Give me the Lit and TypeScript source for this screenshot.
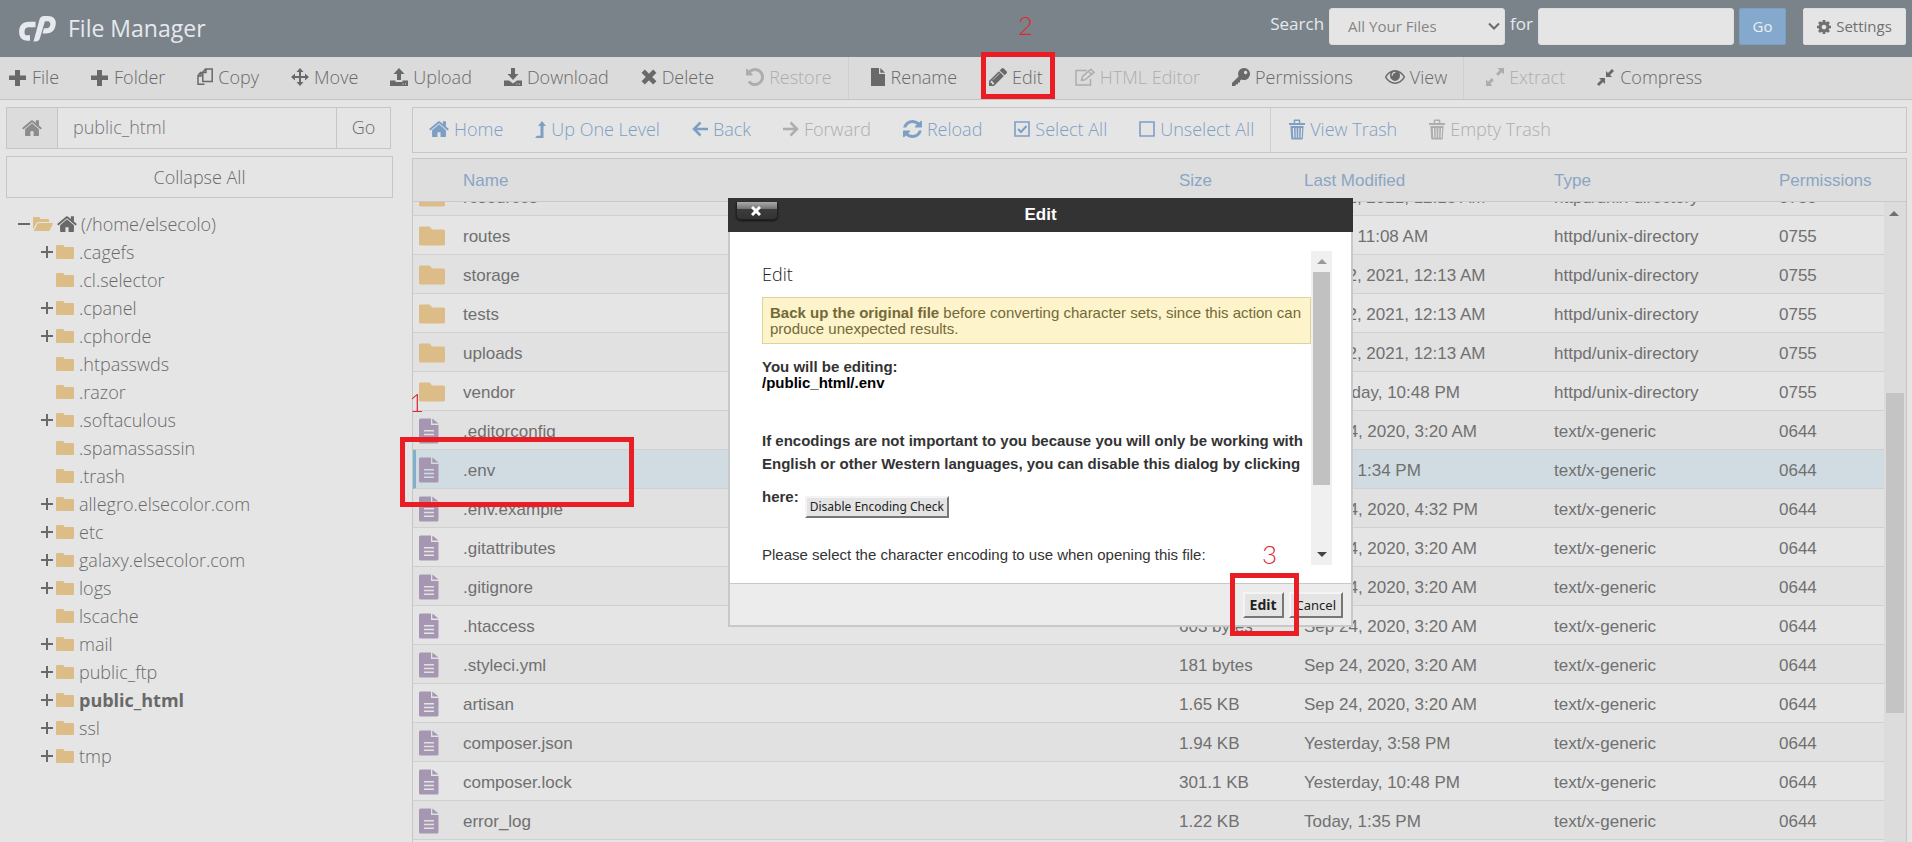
import { LitElement, html, svg, css } from "lit";
import { customElement, property, query } from "lit/decorators.js";
import { classMap } from "lit/directives/class-map.js";

type Glyph = { w: number; h: number; box: string; art: unknown };

const HOME = svg`<path d="M1472 992v480q0 26-19 45t-45 19h-384v-384h-256v384h-384q-26 0-45-19t-19-45v-480q0-1 .5-3t.5-3l575-474 575 474q1 2 1 6zm223-69l-62 74q-8 9-21 11h-3q-13 0-21-7l-692-577-692 577q-12 8-24 7-13-2-21-11l-62-74q-8-10-7-23.5t11-21.5l719-599q32-26 76-26t76 26l244 204v-195q0-14 9-23t23-9h192q14 0 23 9t9 23v408l219 182q10 8 11 21.5t-7 23.5z"/>`;
const TRASH = svg`<path d="M0 4h17v2H0zM5 4V1.6Q5 .5 6.1 .5h4.8Q12 .5 12 1.600V4h-1.500V2h-4v2z"/><path fill-rule="evenodd" d="M1.500 7h14l-.8 12.400q0 1.100-1.100 1.100H3.400q-1.100 0-1.100-1.100zM4 9l.5 9.700h1.200L5.300 9zm3 0 .2 9.700h1L8 9zm3 0-.2 9.700h1L11 9zm2.800 0-.5 9.700h1.200L14 9z"/>`;

const GLYPHS: Record<string, Glyph> = {
  plus: { w: 18, h: 17, box: "0 0 18 17", art: svg`<path d="M6 1h5v5.500h6v4.500h-6v6H6v-6H0V6.500h6z"/>` },
  copy: {
    w: 16, h: 18, box: "0 0 16 18",
    art: svg`<path fill="none" stroke="currentColor" stroke-width="1.500" d="M6 4.500H3.500L1 7.500V16.300h6.500M4 5v3H1M5.800 4.200 8.500 1H15.200V13.500H5.800zM9 1v3.500H6"/>`,
  },
  move: {
    w: 18, h: 18, box: "0 0 18 18",
    art: svg`<path d="M9 0l3.500 4H10v4h4V5.500L18 9l-4 3.500V10h-4v4h2.500L9 18l-3.500-4H8v-4H4v2.500L0 9l4-3.500V8h4V4H5.500z"/>`,
  },
  upload: {
    w: 18, h: 18, box: "0 0 18 18",
    art: svg`<path d="M9 0l5.500 6H11v6H7V6H3.500zM0 12.500h5.500v1.500h7v-1.500H18V18H0zm12.500 3v1h1v-1zm2.500 0v1h1v-1z" fill-rule="evenodd"/>`,
  },
  download: {
    w: 18, h: 18, box: "0 0 18 18",
    art: svg`<path d="M7 0h4v6h3.500L9 12 3.500 6H7zM0 12.500h5L9 15.500l4-3h5V18H0zm12.500 3v1h1v-1zm2.500 0v1h1v-1z" fill-rule="evenodd"/>`,
  },
  times: { w: 16, h: 16, box: "0 0 16 16", art: svg`<path fill="none" stroke="currentColor" stroke-width="4.600" d="M2.200 2.200 13.800 13.800M13.800 2.200 2.200 13.800"/>` },
  undo: {
    w: 18, h: 18, box: "128 128 1536 1536",
    art: svg`<path d="M1664 896q0 156-61 298t-164 245-245 164-298 61q-172 0-327-72.500t-264-204.500q-7-10-6.500-22.500t8.500-20.500l137-138q10-9 25-9 16 2 23 12 73 95 179 147t225 52q104 0 198.500-40.500t163.500-109.500 109.500-163.500 40.500-198.500-40.500-198.500-109.500-163.500-163.500-109.500-198.500-40.500q-98 0-188 35.500t-160 101.500l137 138q31 30 14 69-17 40-59 40h-448q-26 0-45-19t-19-45v-448q0-42 40-59 39-17 69 14l130 129q107-101 244.500-156.500t284.500-55.500q156 0 298 61t245 164 164 245 61 298z"/>`,
  },
  file: { w: 15, h: 18, box: "0 0 15 18", art: svg`<path d="M0 0h8v6h6v12H0zM9.300 0 14 4.800H9.300z"/>` },
  pencil: {
    w: 18, h: 18, box: "128 149 1515 1515",
    art: svg`<path d="M491 1536l91-91-235-235-91 91v107h128v128h107zm523-928q0-22-22-22-10 0-17 7l-542 542q-7 7-7 17 0 22 22 22 10 0 17-7l542-542q7-7 7-17zm-54-192l416 416-832 832h-416v-416zm683 96q0 53-37 90l-166 166-416-416 166-165q36-38 90-38 53 0 91 38l235 234q37 39 37 91z"/>`,
  },
  compose: {
    w: 20, h: 18, box: "0 0 20 18",
    art: svg`<path fill="none" stroke="currentColor" stroke-width="1.500" d="M12 2.500H1V17H15.500V11"/><path fill="none" stroke="currentColor" stroke-width="1.500" d="M6.500 12.300 7.500 8.500 15.800 1.200 19 4.300 10 11.800zM13.500 3.200l3.200 3"/>`,
  },
  key: {
    w: 18, h: 18, box: "0 0 18 18",
    art: svg`<path fill-rule="evenodd" d="M12 0a6 6 0 1 1-2.600 11.400L8 12.800v1.700H6v1.800H4.200L3 18H0v-3l6.600-6.600A6 6 0 0 1 12 0zm1.600 2.800a1.700 1.700 0 1 0 0 3.400 1.700 1.700 0 0 0 0-3.400z"/>`,
  },
  eye: {
    w: 20, h: 14, box: "0 384 1792 1152",
    art: svg`<path d="M1664 960q-152-236-381-353 61 104 61 225 0 185-131.500 316.500t-316.500 131.500-316.500-131.500-131.500-316.500q0-121 61-225-229 117-381 353 133 205 333.500 326.500t434.500 121.500 434.500-121.500 333.500-326.500zm-720-384q0-20-14-34t-34-14q-125 0-214.500 89.500t-89.500 214.500q0 20 14 34t34 14 34-14 14-34q0-86 61-147t147-61q20 0 34-14t14-34zm848 384q0 34-20 69-140 230-376.500 368.500t-499.500 138.500-499.500-139-376.500-368q-20-35-20-69t20-69q140-229 376.500-368t499.500-139 499.500 139 376.500 368q20 35 20 69z"/>`,
  },
  expand: {
    w: 18, h: 18, box: "0 0 18 18",
    art: svg`<path d="M18 0v6.500l-2.200-2.200-3.600 3.600-2.100-2.100 3.600-3.600L11.500 0zM0 18v-6.500l2.200 2.200 3.600-3.600 2.100 2.100-3.600 3.600L6.500 18z"/>`,
  },
  compress: {
    w: 18, h: 17, box: "0 0 18 17",
    art: svg`<path d="M9 8V2l2 2L15 0l2 2-4 4 2 2zM8 9v6l-2-2-4 4-2-2 4-4-2-2z"/>`,
  },
  home: { w: 20, h: 16, box: "64 240 1664 1300", art: HOME },
  levelup: { w: 11, h: 17, box: "0 0 11 17", art: svg`<path d="M7 0l4 5H8.500v12H0l2-2.300h3.500V5H3z"/>` },
  left: { w: 16, h: 16, box: "0 0 16 16", art: svg`<path fill="none" stroke="currentColor" stroke-width="2.500" d="M8.500 1.500 2 8l6.500 6.500M2 8h14"/>` },
  right: { w: 16, h: 16, box: "0 0 16 16", art: svg`<path fill="none" stroke="currentColor" stroke-width="2.500" d="M7.500 1.500 14 8l-6.500 6.500M14 8H0"/>` },
  refresh: {
    w: 19, h: 18, box: "128 128 1536 1536",
    art: svg`<path d="M1639 1056q0 5-1 7-64 268-268 434.500t-478 166.500q-146 0-282.500-55t-243.500-157l-129 129q-19 19-45 19t-45-19-19-45v-448q0-26 19-45t45-19h448q26 0 45 19t19 45-19 45l-137 137q71 66 161 102t187 36q134 0 250-65t186-179q11-17 53-117 8-23 30-23h192q13 0 22.500 9.500t9.500 22.500zm25-800v448q0 26-19 45t-45 19h-448q-26 0-45-19t-19-45 19-45l138-138q-148-137-349-137-134 0-250 65t-186 179q-11 17-53 117-8 23-30 23h-199q-13 0-22.500-9.500t-9.500-22.500v-7q65-268 270-434.500t480-166.500q146 0 284 55.500t245 156.500l130-129q19-19 45-19t45 19 19 45z"/>`,
  },
  check: { w: 16, h: 16, box: "0 0 16 16", art: svg`<path fill="none" stroke="currentColor" stroke-width="1.600" d="M1 1h14v14H1z"/><path fill="none" stroke="currentColor" stroke-width="2" d="M4 8l3 3 5.500-6"/>` },
  uncheck: { w: 16, h: 16, box: "0 0 16 16", art: svg`<path fill="none" stroke="currentColor" stroke-width="1.600" d="M1 1h14v14H1z"/>` },
  trash: { w: 16, h: 21, box: "0 0 17 21", art: TRASH },
  gear: {
    w: 14, h: 14, box: "128 128 1536 1536",
    art: svg`<path d="M1152 896q0-106-75-181t-181-75-181 75-75 181 75 181 181 75 181-75 75-181zm512-109v222q0 12-8 23t-20 13l-185 28q-19 54-39 91 35 50 107 138 10 12 10 25t-9 23q-27 37-99 108t-94 71q-12 0-26-9l-138-108q-44 23-91 38-16 136-29 186-7 28-36 28h-222q-14 0-24.500-8.500t-11.500-21.500l-28-184q-49-16-90-37l-141 107q-10 9-25 9-14 0-25-11-126-114-165-168-7-10-7-23 0-12 8-23 15-21 51-66.500t54-70.500q-27-50-41-99l-183-27q-13-2-21-12.500t-8-23.500v-222q0-12 8-23t19-13l186-28q14-46 39-92-40-57-107-138-10-12-10-24 0-10 9-23 26-36 98.500-107.500t94.500-71.500q13 0 26 10l138 107q44-23 91-38 16-136 29-186 7-28 36-28h222q14 0 24.500 8.500t11.500 21.500l28 184q49 16 90 37l142-107q9-9 24-9 13 0 25 10 129 119 165 170 7 8 7 22 0 12-8 23-15 21-51 66.500t-54 70.500q26 50 41 98l183 28q13 2 21 12.500t8 23.500z"/>`,
  },
  folder: { w: 18, h: 14, box: "0 0 18 14", art: svg`<path d="M0 1Q0 0 1 0h6q1 0 1 1.200Q8 2 9 2h8q1 0 1 1v10q0 1-1 1H1q-1 0-1-1z"/>` },
  folderOpen: { w: 20, h: 14, box: "0 0 20 14", art: svg`<path d="M0 12.500V1Q0 0 1 0h5q1 0 1 1v1h8q1 0 1 1v2H5.500Q4.200 5 3.500 6zM.8 14 4.300 7Q4.700 6 5.800 6H19q1.300 0 .8 1L17 13q-.5 1-1.500 1z"/>` },
  bigFolder: { w: 26, h: 20, box: "0 0 26 20", art: svg`<path d="M0 1.500Q0 .5 1.500 .5H10q1 0 1.500 1L13 3.500h11.500q1.500 0 1.500 1.500v13q0 1.500-1.500 1.500h-23Q0 19.500 0 18z"/>` },
  document: {
    w: 20, h: 26, box: "0 0 20 26",
    art: svg`<path fill-rule="evenodd" d="M1.500 .5H12V7h7.500v17q0 1.500-1.500 1.500H1.500Q0 25.500 0 24V2Q0 .5 1.500 .5zM5 12v1.500h10V12zm0 3.700v1.500h10v-1.500zm0 3.700v1.500h10v-1.500zM13.300 .5l6.200 5h-6.200z"/>`,
  },
  expandNode: { w: 12, h: 12, box: "0 0 12 12", art: svg`<path d="M5 0h2v5h5v2H7v5H5V7H0V5h5z"/>` },
  collapseNode: { w: 12, h: 12, box: "0 0 12 12", art: svg`<path d="M0 5h12v2H0z"/>` },
};

@customElement("fm-icon")
class FmIcon extends LitElement {
  @property() name = "plus";
  static styles = css`
    :host { display: inline-flex; flex: none; }
    svg { display: block; fill: currentColor; }
  `;
  render() {
    const g = GLYPHS[this.name];
    return html`<svg width=${g.w} height=${g.h} viewBox=${g.box} preserveAspectRatio="none" aria-hidden="true">${g.art}</svg>`;
  }
}

type Action = { icon: string; label: string; off?: boolean; divider?: boolean };

const TOOLS: Action[] = [
  { icon: "plus", label: "File" },
  { icon: "plus", label: "Folder" },
  { icon: "copy", label: "Copy" },
  { icon: "move", label: "Move" },
  { icon: "upload", label: "Upload" },
  { icon: "download", label: "Download" },
  { icon: "times", label: "Delete" },
  { icon: "undo", label: "Restore", off: true },
  { icon: "file", label: "Rename", divider: true },
  { icon: "pencil", label: "Edit" },
  { icon: "compose", label: "HTML Editor", off: true },
  { icon: "key", label: "Permissions" },
  { icon: "eye", label: "View" },
  { icon: "expand", label: "Extract", off: true, divider: true },
  { icon: "compress", label: "Compress" },
];

const NAV: Action[] = [
  { icon: "home", label: "Home" },
  { icon: "levelup", label: "Up One Level" },
  { icon: "left", label: "Back" },
  { icon: "right", label: "Forward", off: true },
  { icon: "refresh", label: "Reload" },
  { icon: "check", label: "Select All" },
  { icon: "uncheck", label: "Unselect All" },
  { icon: "trash", label: "View Trash", divider: true },
  { icon: "trash", label: "Empty Trash", off: true },
];

const TREE: [name: string, children: boolean][] = [
  [".cagefs", true], [".cl.selector", false], [".cpanel", true], [".cphorde", true],
  [".htpasswds", false], [".razor", false], [".softaculous", true], [".spamassassin", false],
  [".trash", false], ["allegro.elsecolor.com", true], ["etc", true], ["galaxy.elsecolor.com", true],
  ["logs", true], ["lscache", false], ["mail", true], ["public_ftp", true],
  ["public_html", true], ["ssl", true], ["tmp", true],
];

const DIR = "httpd/unix-directory";
const TXT = "text/x-generic";
const FILES: [name: string, size: string, modified: string, type: string, mode: string][] = [
  ["resources", "4 KB", "Feb 12, 2021, 12:13 AM", DIR, "0755"],
  ["routes", "4 KB", "Today, 11:08 AM", DIR, "0755"],
  ["storage", "4 KB", "Feb 12, 2021, 12:13 AM", DIR, "0755"],
  ["tests", "4 KB", "Feb 12, 2021, 12:13 AM", DIR, "0755"],
  ["uploads", "4 KB", "Feb 12, 2021, 12:13 AM", DIR, "0755"],
  ["vendor", "4 KB", "Yesterday, 10:48 PM", DIR, "0755"],
  [".editorconfig", "220 bytes", "Sep 24, 2020, 3:20 AM", TXT, "0644"],
  [".env", "1.1 KB", "Today, 1:34 PM", TXT, "0644"],
  [".env.example", "1 KB", "Sep 24, 2020, 4:32 PM", TXT, "0644"],
  [".gitattributes", "111 bytes", "Sep 24, 2020, 3:20 AM", TXT, "0644"],
  [".gitignore", "191 bytes", "Sep 24, 2020, 3:20 AM", TXT, "0644"],
  [".htaccess", "603 bytes", "Sep 24, 2020, 3:20 AM", TXT, "0644"],
  [".styleci.yml", "181 bytes", "Sep 24, 2020, 3:20 AM", TXT, "0644"],
  ["artisan", "1.65 KB", "Sep 24, 2020, 3:20 AM", TXT, "0644"],
  ["composer.json", "1.94 KB", "Yesterday, 3:58 PM", TXT, "0644"],
  ["composer.lock", "301.1 KB", "Yesterday, 10:48 PM", TXT, "0644"],
  ["error_log", "1.22 KB", "Today, 1:35 PM", TXT, "0644"],
];

const resets = css`
  *, *::before, *::after { box-sizing: border-box; }
  button, input, select { font: inherit; color: inherit; margin: 0; }
  a { color: inherit; text-decoration: none; }
  ul { list-style: none; margin: 0; padding: 0; }
`;

@customElement("fm-actions")
class FmActions extends LitElement {
  @property({ attribute: false }) items: Action[] = [];
  static styles = [
    resets,
    css`
      :host { display: flex; align-items: stretch; overflow: hidden; white-space: nowrap; }
      .action {
        display: flex; align-items: center; gap: 5px; flex: none;
        padding: 0 16px 2px; border: 0; background: none; cursor: pointer;
      }
      .divided { border-left: 1px solid #cfcfcf; padding-left: var(--divider-gap, 18px); }
      .action:disabled { color: #adadad; cursor: default; }
    `,
  ];
  render() {
    return this.items.map(
      (a) => html`<button type="button" class=${classMap({ action: true, divided: !!a.divider })} ?disabled=${a.off}>
        <fm-icon name=${a.icon}></fm-icon>${a.label}
      </button>`,
    );
  }
}

@customElement("fm-tree")
class FmTree extends LitElement {
  @property() current = "";
  static styles = [
    resets,
    css`
      :host { display: block; }
      .row { display: flex; align-items: center; height: 28px; gap: 3px; white-space: nowrap; }
      .root { padding-left: 12px; }
      .child { padding-left: 35px; }
      .toggle { display: flex; width: 12px; padding: 0; border: 0; background: none; }
      .name { display: flex; align-items: center; gap: 5px; }
      .root .name { gap: 4px; }
      .tint { color: #dcbd88; }
      .current { font-weight: 700; }
    `,
  ];
  render() {
    return html`<ul>
      <li>
        <div class="row root">
          <button type="button" class="toggle" aria-label="Collapse home"><fm-icon name="collapseNode"></fm-icon></button>
          <a class="name" href="#home"><fm-icon class="tint" name="folderOpen"></fm-icon><fm-icon name="home"></fm-icon>(/home/elsecolo)</a>
        </div>
        <ul>
          ${TREE.map(
            ([name, children]) => html`<li class="row child">
              ${children
                ? html`<button type="button" class="toggle" aria-label="Expand ${name}"><fm-icon name="expandNode"></fm-icon></button>`
                : html`<span class="toggle"></span>`}
              <a class=${classMap({ name: true, current: name === this.current })} href="#${name}">
                <fm-icon class="tint" name="folder"></fm-icon>${name}
              </a>
            </li>`,
          )}
        </ul>
      </li>
    </ul>`;
  }
}

@customElement("fm-files")
class FmFiles extends LitElement {
  @property() selected = "";
  @query(".scroller") scroller!: HTMLElement;
  static styles = [
    resets,
    css`
      :host {
        display: block; position: relative; isolation: isolate; min-height: 0;
        border: 1px solid #c6c6c6; border-bottom: 0; color: #707070;
        font-family: "Liberation Sans", Arial, sans-serif; font-size: 17px; font-weight: 400;
      }
      .scroller { height: 100%; overflow: hidden; padding-bottom: 2px; }
      .files { width: 100%; border-collapse: separate; border-spacing: 0; table-layout: fixed; }
      .c-icon { width: 41px; }
      .c-size { width: 125px; }
      .c-modified { width: 250px; }
      .c-type { width: 225px; }
      .c-mode { width: 136px; }
      th {
        position: sticky; top: 0; z-index: 1; height: 43px; padding: 0 9px; text-align: left;
        font-weight: 400; color: #8ba5c4; background: #dedede; border-bottom: 1px solid #cacaca;
      }
      td { height: 39px; padding: 2px 9px 0; border-bottom: 1px solid #d0d0d0; white-space: nowrap; }
      .icon { padding: 1px 0 0 6px; }
      .icon fm-icon { display: flex; color: #a597b1; }
      .icon .dir { color: #dcbd88; }
      tbody tr:nth-child(odd) { background: #e1e1e1; }
      tbody .selected { background: #d0dce2; }
      .selected .icon { padding-left: 3px; border-left: 3px solid #7fb0cd; }
      .bar {
        position: absolute; z-index: 2; top: 43px; right: 0; bottom: 0; width: 22px;
        display: grid; grid-template-rows: 191px 320px 1fr; background: #dcdcdc; padding-right: 2px;
      }
      .up { justify-self: center; align-self: start; margin-top: 9px; border: 5px solid transparent; border-top: 0; border-bottom-color: #707070; }
      .thumb { background: #c4c4c4; margin-left: 2px; }
    `,
  ];
  firstUpdated() {
    this.scroller.scrollTop = 25;
  }
  render() {
    return html`
      <div class="scroller">
        <table class="files">
          <colgroup>
            <col class="c-icon" /><col /><col class="c-size" /><col class="c-modified" /><col class="c-type" /><col class="c-mode" />
          </colgroup>
          <thead>
            <tr><th></th><th>Name</th><th>Size</th><th>Last Modified</th><th>Type</th><th>Permissions</th></tr>
          </thead>
          <tbody>
            ${FILES.map(([name, size, modified, type, mode]) => {
              const dir = type === DIR;
              return html`<tr class=${name === this.selected ? "selected" : ""}>
                <td class="icon"><fm-icon class=${dir ? "dir" : ""} name=${dir ? "bigFolder" : "document"}></fm-icon></td>
                <td>${name}</td><td>${size}</td><td>${modified}</td><td>${type}</td><td>${mode}</td>
              </tr>`;
            })}
          </tbody>
        </table>
      </div>
      <div class="bar"><span class="up"></span><span class="thumb"></span></div>
    `;
  }
}

@customElement("fm-dialog")
class FmDialog extends LitElement {
  @property() path = "";
  static styles = [
    resets,
    css`
      :host {
        display: block; font-family: "Liberation Sans", Arial, sans-serif; font-size: 15px;
        font-weight: 400; line-height: 16px; color: #333; background: #fff;
      }
      .title {
        position: relative; display: flex; align-items: center; justify-content: center; height: 34px;
        margin: 0; background: #333; color: #fff; font-size: 17px; font-weight: 700;
      }
      .close {
        position: absolute; left: 8px; top: 4px; width: 42px; height: 18px; padding: 0 3px 0 0;
        display: flex; align-items: center; justify-content: center; color: #fff;
        border: 1px solid #222; border-top: 0; border-radius: 0 0 5px 5px;
        background: linear-gradient(#aaa 0, #777 38%, #3c3c3c 42%, #333 100%);
        box-shadow: 0 1px 2px #111;
      }
      .body {
        display: grid; grid-template-columns: 1fr 21px; height: 351px; padding: 19px 19px 18px 32px;
        border: 2px solid #c8c8c8; border-width: 0 2px;
      }
      .heading { margin: 15px 0 14px; font: 300 18px/17px "Open Sans", sans-serif; color: #222; }
      .warning { margin: 0 0 15px; padding: 7px 2px 6px 7px; border: 1px solid #ddd39b; background: #fdf4cb; color: #746937; }
      .target { margin: 0 0 38px; font-weight: 700; }
      .path { display: block; color: #000; }
      .hint { margin: 0 0 29px; font-weight: 700; line-height: 23px; }
      .check { display: flex; align-items: flex-start; gap: 6px; margin-top: 10px; }
      .prompt { margin: 0; white-space: nowrap; }
      .scrollbar { display: grid; grid-template-rows: 21px 213px 1fr; background: #f0f0f0; justify-items: center; }
      .arrow { border: 5px solid transparent; align-self: center; }
      .up { border-top: 0; border-bottom-color: #999; }
      .thumb { width: 17px; background: #c1c1c1; }
      .down { border-bottom: 0; border-top-color: #444; align-self: end; margin-bottom: 8px; }
      .key {
        font: 400 13px/14px "Noto Sans", sans-serif; color: #222; background: #e4e4e4; white-space: nowrap;
        border: 2px solid #777; border-top-color: #f4f4f4; border-left-color: #f4f4f4;
      }
      .small { height: 22px; margin-top: 11px; padding: 0 3px; font-size: 12px; }
      .footer {
        display: flex; align-items: center; justify-content: flex-end; gap: 5px; height: 44px;
        padding: 0 8px; background: #ececec; border: 2px solid #c8c8c8; border-top-width: 1px;
      }
      .act { height: 26px; padding: 0 5px; }
      .primary { font-weight: 700; font-size: 14px; }
    `,
  ];
  render() {
    return html`
      <h1 class="title">
        <button type="button" class="close" aria-label="Close">
          <svg width="10" height="10" viewBox="0 0 10 10" aria-hidden="true"><path d="M1 1l8 8M9 1L1 9" stroke="#fff" stroke-width="3" /></svg>
        </button>
        Edit
      </h1>
      <div class="body">
        <div>
          <h2 class="heading">Edit</h2>
          <p class="warning"><strong>Back up the original file</strong> before converting character sets, since this action can produce unexpected results.</p>
          <p class="target">You will be editing:<span class="path">${this.path}</span></p>
          <div class="hint">
            If encodings are not important to you because you will only be working with
            English or other Western languages, you can disable this dialog by clicking
            <div class="check">here: <button type="button" class="key small">Disable Encoding Check</button></div>
          </div>
          <p class="prompt">Please select the character encoding to use when opening this file:</p>
        </div>
        <div class="scrollbar"><span class="arrow up"></span><span class="thumb"></span><span class="arrow down"></span></div>
      </div>
      <div class="footer">
        <button type="button" class="key act primary">Edit</button>
        <button type="button" class="key act">Cancel</button>
      </div>
    `;
  }
}

@customElement("app-root")
class AppRoot extends LitElement {
  static styles = [
    resets,
    css`
      :host {
        display: flex; flex-direction: column; position: relative; height: 100vh; overflow: hidden;
        background: #e5e5e5; color: #696969; font: 300 18px/23px "Open Sans", sans-serif;
      }
      .banner {
        display: flex; align-items: center; height: 57px; flex: none; padding: 0 6px 0 18px;
        background: #7b838a; color: #e6e9ee;
      }
      .brand { display: flex; align-items: center; gap: 11px; margin: 0; font-size: 23px; font-weight: 400; }
      .search { display: flex; align-items: center; gap: 5px; margin-left: auto; height: 37px; margin-bottom: 4px; font-size: 17px; font-weight: 400; }
      .label { margin-bottom: 6px; }
      .picker { position: relative; display: flex; height: 37px; }
      .select {
        appearance: none; width: 176px; padding: 0 36px 0 18px; border: 1px solid #dedede; border-radius: 3px;
        background: #e5e5e5; color: #858585; font-size: 15px;
      }
      .caret { position: absolute; right: 5px; top: 14px; pointer-events: none; }
      .term { width: 196px; height: 37px; padding: 0 12px; border: 1px solid #dedede; border-radius: 3px; background: #e5e5e5; color: #666; }
      .go { width: 47px; height: 37px; padding: 0; border: 1px solid #7ba1c7; border-radius: 2px; background: #85a9cc; color: #e9eef4; font-size: 15px; }
      .settings {
        display: flex; align-items: center; justify-content: center; gap: 5px; width: 103px; height: 37px; margin-left: 12px; padding: 0;
        border: 1px solid #dedede; border-radius: 2px; background: #e5e5e5; color: #707070; font-size: 15px;
      }
      .toolbar { flex: none; background: #dcdbdb; border-bottom: 1px solid #c4c4c4; }
      .tools { --divider-gap: 22px; height: 42px; margin-left: -7px; }
      .main { flex: 1; min-height: 0; display: grid; grid-template-columns: 387px minmax(0, 1fr); gap: 19px; padding: 7px 5px 0 6px; }
      .side { min-width: 0; }
      .path { display: grid; grid-template-columns: 51px 1fr 54px; height: 42px; margin-right: 2px; border: 1px solid #c6c6c6; }
      .home { display: flex; align-items: center; justify-content: center; border: 0; border-right: 1px solid #c6c6c6; background: #dcdcdc; color: #8c8c8c; }
      .where { min-width: 0; padding: 0 15px 2px; border: 0; background: none; color: #757575; }
      .jump { border: 0; border-left: 1px solid #c6c6c6; background: none; padding: 0 0 2px; }
      .collapse { display: block; width: 100%; height: 42px; margin: 7px 0 12px; padding: 0; border: 1px solid #c6c6c6; background: none; }
      .content { display: flex; flex-direction: column; min-width: 0; min-height: 0; }
      .nav { height: 46px; flex: none; margin-bottom: 5px; border: 1px solid #c6c6c6; color: #7d9fc4; }
      .files { flex: 1; }
      .dialog { position: absolute; left: 728px; top: 198px; width: 625px; }
      .mark { position: absolute; border: 5px solid #ea1c24; pointer-events: none; }
      .step { position: absolute; color: #de2a33; font: 300 26px/26px Lato, sans-serif; pointer-events: none; }
      .mark-row { left: 400px; top: 437px; width: 234px; height: 70px; }
      .mark-tool { left: 981px; top: 52px; width: 74px; height: 47px; }
      .mark-confirm { left: 1230px; top: 573px; width: 69px; height: 63px; }
      .step-1 { left: 409px; top: 389px; }
      .step-2 { left: 1018px; top: 12px; }
      .step-3 { left: 1262px; top: 541px; }
    `,
  ];
  render() {
    return html`
      <header class="banner">
        <h1 class="brand">
          <svg width="39" height="26" viewBox="0 0 39 26" aria-label="cPanel" role="img">
            <path fill="none" stroke="#e6e9ee" stroke-width="5.500" d="M17.500 8.500H10.500Q5.300 8.500 4 13.500L3.800 15.500Q3.500 22 9 22H12" />
            <path fill="#e6e9ee" d="M15.500 25.500 21.500 3.500Q22.300 0 26 0H30Q38 0 37.800 8 37 17 28.500 17.500H24.500L26 12.300H28.500Q32 12 32.300 8.500 32.300 5.500 30 5.300H27.800Q26.800 5.300 26.500 6.500L22 22Q21 25.500 17.500 25.500z" />
          </svg>
          File Manager
        </h1>
        <form class="search">
          <label class="label" for="scope">Search</label>
          <span class="picker">
            <select class="select" id="scope"><option>All Your Files</option></select>
            <svg class="caret" width="12" height="10" viewBox="0 0 12 10" aria-hidden="true"><path d="M1 1.500l5 5 5-5" fill="none" stroke="#6a6a6a" stroke-width="2" /></svg>
          </span>
          <label class="label" for="term">for</label>
          <input class="term" id="term" type="text" />
          <button type="button" class="go">Go</button>
          <button type="button" class="settings"><fm-icon name="gear"></fm-icon>Settings</button>
        </form>
      </header>
      <div class="toolbar"><fm-actions class="tools" .items=${TOOLS}></fm-actions></div>
      <main class="main">
        <aside class="side">
          <form class="path">
            <button type="button" class="home" aria-label="Home"><fm-icon name="home"></fm-icon></button>
            <input class="where" type="text" aria-label="Path" value="public_html" />
            <button type="button" class="jump">Go</button>
          </form>
          <button type="button" class="collapse">Collapse All</button>
          <fm-tree current="public_html"></fm-tree>
        </aside>
        <section class="content">
          <fm-actions class="nav" .items=${NAV}></fm-actions>
          <fm-files class="files" selected=".env"></fm-files>
        </section>
      </main>
      <fm-dialog class="dialog" role="dialog" path="/public_html/.env"></fm-dialog>
      <span class="mark mark-row"></span>
      <span class="mark mark-tool"></span>
      <span class="mark mark-confirm"></span>
      <span class="step step-1">1</span>
      <span class="step step-2">2</span>
      <span class="step step-3">3</span>
    `;
  }
}
